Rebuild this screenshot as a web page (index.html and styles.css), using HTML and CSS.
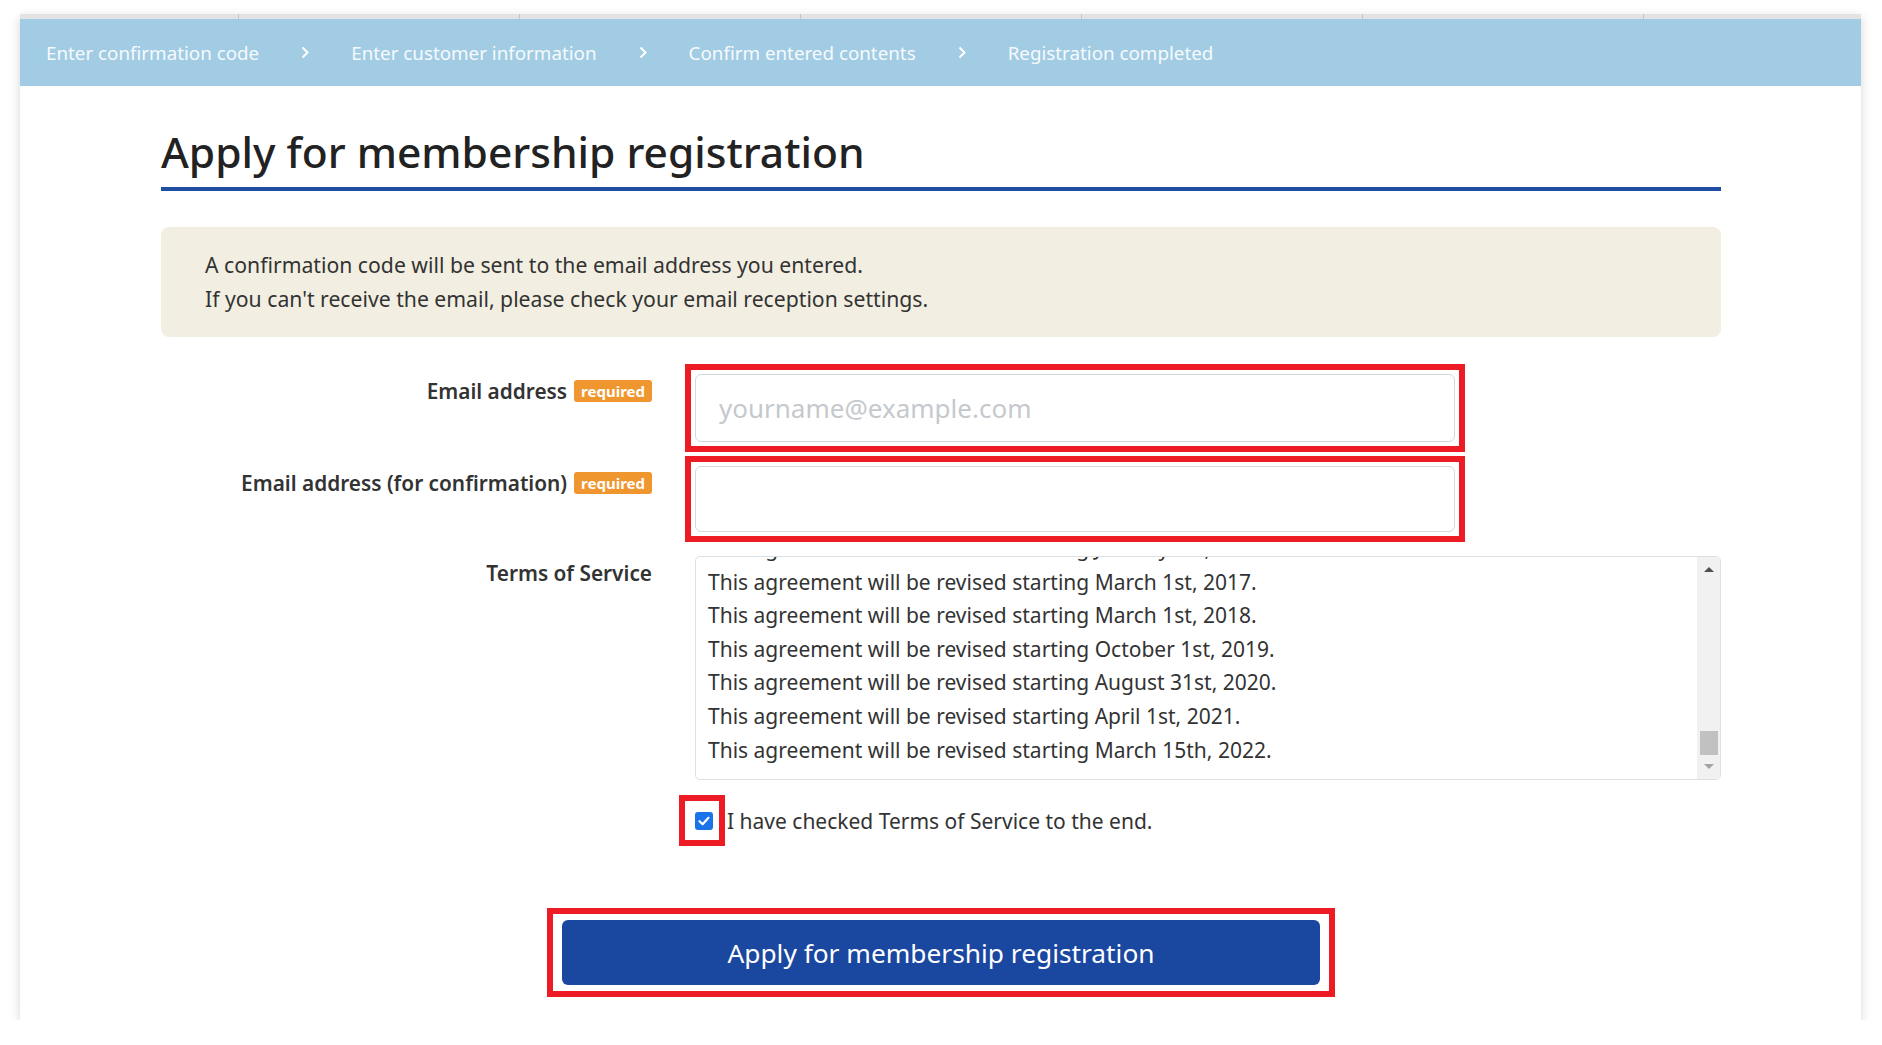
FILE: index.html
```html
<!DOCTYPE html>
<html lang="en">
<head>
<meta charset="utf-8">
<title>Apply for membership registration</title>
<link rel="stylesheet" href="styles.css">
</head>
<body>
<div class="card">
  <div class="topline"></div>
  <nav class="steps">
    <span class="step">Enter confirmation code</span>
    <svg class="chev" width="8" height="13" viewBox="0 0 8 13"><path d="M1.5 1.5 L6.5 6.5 L1.5 11.5" fill="none" stroke="#ffffff" stroke-width="2"/></svg>
    <span class="step">Enter customer information</span>
    <svg class="chev" width="8" height="13" viewBox="0 0 8 13"><path d="M1.5 1.5 L6.5 6.5 L1.5 11.5" fill="none" stroke="#ffffff" stroke-width="2"/></svg>
    <span class="step">Confirm entered contents</span>
    <svg class="chev" width="8" height="13" viewBox="0 0 8 13"><path d="M1.5 1.5 L6.5 6.5 L1.5 11.5" fill="none" stroke="#ffffff" stroke-width="2"/></svg>
    <span class="step">Registration completed</span>
  </nav>
  <main class="content">
    <h1 class="title">Apply for membership registration</h1>
    <div class="notice">
      <p>A confirmation code will be sent to the email address you entered.</p>
      <p>If you can't receive the email, please check your email reception settings.</p>
    </div>
    <form class="form">
      <div class="label-cell"><label class="label">Email address</label><span class="badge">required</span></div>
      <div class="field"><div class="marked"><input class="input" type="email" placeholder="yourname@example.com"></div></div>

      <div class="label-cell"><label class="label">Email address (for confirmation)</label><span class="badge">required</span></div>
      <div class="field"><div class="marked"><input class="input input-confirm" type="email"></div></div>

      <div class="label-cell"><span class="label">Terms of Service</span></div>
      <div class="field">
        <div class="terms">
          <div class="terms-text">
            <div class="terms-lines">
              <p>This agreement will be revised starting January 1st, 2016.</p>
              <p>This agreement will be revised starting March 1st, 2017.</p>
              <p>This agreement will be revised starting March 1st, 2018.</p>
              <p>This agreement will be revised starting October 1st, 2019.</p>
              <p>This agreement will be revised starting August 31st, 2020.</p>
              <p>This agreement will be revised starting April 1st, 2021.</p>
              <p>This agreement will be revised starting March 15th, 2022.</p>
            </div>
          </div>
          <div class="scrollbar">
            <span class="arrow-up"></span>
            <span class="track"></span>
            <span class="thumb"></span>
            <span class="arrow-down"></span>
          </div>
        </div>
      </div>

      <div class="check-row">
        <span class="checkbox"><svg width="18" height="18" viewBox="0 0 18 18"><path d="M4.5 9.2 L7.6 12.2 L13.5 5.8" fill="none" stroke="#ffffff" stroke-width="2.2" stroke-linecap="round" stroke-linejoin="round"/></svg></span>
        <span class="check-text">I have checked Terms of Service to the end.</span>
      </div>
    </form>
    <div class="submit-wrap">
      <button class="submit" type="button">Apply for membership registration</button>
    </div>
  </main>
</div>
</body>
</html>
```

FILE: styles.css
```css
html, body {
  margin: 0;
  background: #ffffff;
}
body {
  padding: 14px 21px 0 20px;
  font-family: "Noto Sans", "Open Sans", sans-serif;
  color: #333333;
}
p { margin: 0; }

.card {
  background: #ffffff;
  box-shadow: 0 3px 10px rgba(0, 0, 0, 0.16);
  padding-bottom: 23px;
}

.topline {
  height: 5px;
  background-color: #e3e3e3;
  background-image: repeating-linear-gradient(to right, transparent 0, transparent 280px, #c6c6c6 280px, #c6c6c6 281px);
  background-position: -62px 0;
}

.steps {
  height: 67px;
  background: #a2cce3;
  display: flex;
  align-items: center;
  gap: 42px;
  padding-left: 26px;
  color: #f6fafd;
  font-size: 18.8px;
}
.chev { flex: none; }

.content {
  padding: 0 140px 0 141px;
}

.title {
  margin: 42px 0 0;
  font-size: 42.5px;
  font-weight: 500;
  line-height: 48px;
  color: #222222;
  padding-bottom: 11px;
  border-bottom: 4px solid #1f4ea3;
}

.notice {
  margin-top: 36px;
  background: #f2efe2;
  border-radius: 8px;
  padding: 21px 44px;
  font-size: 21.2px;
  line-height: 34px;
  color: #333333;
}

.form {
  margin-top: 37px;
  display: grid;
  grid-template-columns: 491px 1fr;
  column-gap: 43px;
  row-gap: 24px;
}

.label-cell {
  display: flex;
  justify-content: flex-end;
  align-items: center;
  gap: 7px;
  height: 34px;
}
.label {
  font-size: 20.8px;
  font-weight: 600;
  color: #333333;
}
.badge {
  background: #f0962e;
  color: #ffffff;
  font-size: 15px;
  font-weight: 700;
  line-height: 22px;
  padding: 0 7px;
  border-radius: 3px;
}

.marked {
  width: fit-content;
  outline: 6px solid #ed1c24;
  outline-offset: 4px;
}
.input {
  display: block;
  width: 760px;
  height: 68px;
  box-sizing: border-box;
  border: 1px solid #d5d9de;
  border-radius: 6px;
  padding: 0 23px;
  font-family: inherit;
  font-size: 26px;
  color: #333333;
  background: #ffffff;
  outline: none;
}
.input-confirm { height: 66px; }
.input::placeholder { color: #c5c9cd; }

.terms {
  display: flex;
  height: 224px;
  box-sizing: border-box;
  border: 1px solid #dcdfe3;
  border-radius: 5px;
  overflow: hidden;
}
.terms-text {
  flex: 1;
  overflow: hidden;
  padding-left: 12px;
  font-size: 21px;
  line-height: 33.6px;
  color: #333333;
}
.terms-lines { margin-top: -25px; }

.scrollbar {
  width: 23px;
  background: #f1f1f1;
  display: flex;
  flex-direction: column;
  align-items: center;
  padding: 10px 0 10px;
  box-sizing: border-box;
}
.arrow-up {
  width: 0;
  height: 0;
  border-left: 5px solid transparent;
  border-right: 5px solid transparent;
  border-bottom: 5px solid #505050;
}
.track { flex: 1; }
.thumb {
  width: 18px;
  height: 24px;
  background: #c1c1c1;
  margin-bottom: 9px;
}
.arrow-down {
  width: 0;
  height: 0;
  border-left: 5px solid transparent;
  border-right: 5px solid transparent;
  border-top: 5px solid #a3a3a3;
}

.check-row {
  grid-column: 2;
  display: flex;
  align-items: center;
  margin-top: 2px;
  font-size: 21px;
  line-height: 30px;
}
.checkbox {
  position: relative;
  width: 18px;
  height: 18px;
  background: #1a73e8;
  border-radius: 3px;
  margin-right: 14px;
  flex: none;
  display: flex;
}
.checkbox::after {
  content: "";
  position: absolute;
  left: -16px;
  top: -17px;
  width: 46px;
  height: 51px;
  border: 6px solid #ed1c24;
  box-sizing: border-box;
}

.submit-wrap {
  width: fit-content;
  margin: 72px auto 0;
  border: 6px solid #ed1c24;
  padding: 6px 9px;
}
.submit {
  display: block;
  width: 758px;
  height: 65px;
  border: none;
  border-radius: 6px;
  background: #1a47a0;
  color: #ffffff;
  font-family: inherit;
  font-size: 26.3px;
}
```
